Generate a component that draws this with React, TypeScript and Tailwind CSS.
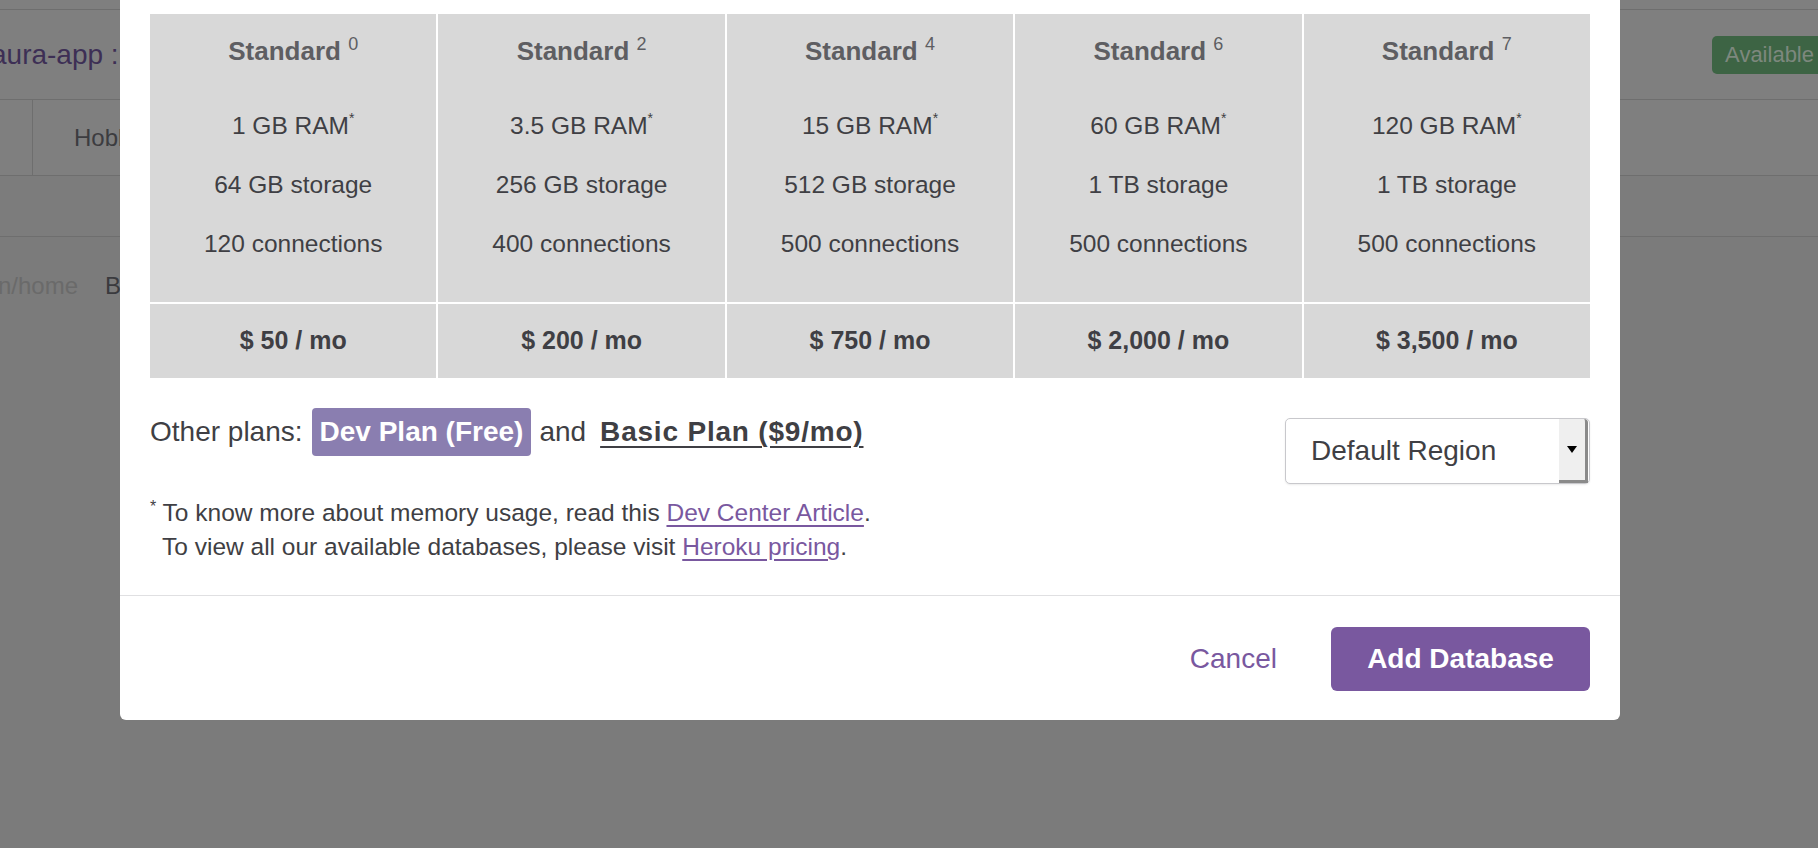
import React from 'react';

const plans = [
  { name: 'Standard', tier: '0', ram: '1 GB RAM', storage: '64 GB storage', conns: '120 connections', price: '$ 50 / mo' },
  { name: 'Standard', tier: '2', ram: '3.5 GB RAM', storage: '256 GB storage', conns: '400 connections', price: '$ 200 / mo' },
  { name: 'Standard', tier: '4', ram: '15 GB RAM', storage: '512 GB storage', conns: '500 connections', price: '$ 750 / mo' },
  { name: 'Standard', tier: '6', ram: '60 GB RAM', storage: '1 TB storage', conns: '500 connections', price: '$ 2,000 / mo' },
  { name: 'Standard', tier: '7', ram: '120 GB RAM', storage: '1 TB storage', conns: '500 connections', price: '$ 3,500 / mo' },
];

function PlanTable() {
  return (
    <div className="grid grid-cols-5 gap-[2px] bg-white">
      {plans.map((p) => (
        <div key={p.tier} className="flex h-[288px] flex-col items-center bg-[#d8d8d8] pt-[20px] text-[24.5px] leading-[34px] text-[#3f3f44]">
          <div className="text-[26px] font-bold text-[#5e5e62]">
            {p.name}{' '}
            <sup className="relative top-[-10px] align-baseline text-[18px] font-normal leading-none">{p.tier}</sup>
          </div>
          <div className="mt-[41px] flex flex-col items-center gap-[25px]">
            <div>
              {p.ram}
              <sup className="relative top-[-11px] text-[14px] leading-none">*</sup>
            </div>
            <div>{p.storage}</div>
            <div>{p.conns}</div>
          </div>
        </div>
      ))}
      {plans.map((p) => (
        <div key={p.tier + 'p'} className="flex h-[74px] items-center justify-center bg-[#d8d8d8] text-[25px] font-bold text-[#3f3f44]">
          {p.price}
        </div>
      ))}
    </div>
  );
}

function RegionSelect() {
  return (
    <div className="mt-[10px] flex h-[66px] w-[305px] items-stretch rounded-[5px] border border-[#c8c8cc] bg-white shadow-[0_1px_2px_rgba(0,0,0,0.08)]">
      <div className="flex flex-1 items-center pl-[25px] text-[28px] text-[#3f3f44]">Default Region</div>
      <div className="mr-[1px] flex w-[29px] items-center justify-center rounded-tr-[4px] border-r-[3px] border-b-[3px] border-[#8a8a8a] bg-[#efefef]">
        <div className="h-0 w-0 border-x-[5px] border-t-[7px] border-x-transparent border-t-black" />
      </div>
    </div>
  );
}

export default function App() {
  return (
    <div className="relative h-[848px] w-full overflow-hidden bg-[#7f7f7f] font-['Liberation_Sans',Arial,sans-serif]">
      {/* page behind the backdrop */}
      <div className="h-[9px]" />
      <div className="flex h-[90px] items-center justify-between border-t border-[#6e6e6e]">
        <span className="ml-[-9px] text-[28px] text-[#3d2f55]">aura-app :</span>
        <span className="mr-[-9px] flex h-[38px] items-center rounded-[5px] bg-[#3d6444] px-[13px] text-[22px] text-[#7d887e]">
          Available
        </span>
      </div>
      <div className="flex h-[77px] border-y border-[#6e6e6e]">
        <div className="w-[33px] border-r border-[#6e6e6e]" />
        <div className="flex items-center pl-[41px] text-[24px] text-[#3c3c40]">Hobby</div>
      </div>
      <div className="h-[61px] border-b border-[#6e6e6e] bg-[#7c7c7c]" />
      <div className="flex gap-[27px] bg-[#7b7b7b] pt-[32px] text-[24px] leading-[34px]">
        <span className="ml-[-2px] text-[#6a6a6a]">n/home</span>
        <span className="text-[#3a3a3e]">Billing</span>
      </div>
      <div className="h-full bg-[#7b7b7b]" />

      {/* dialog */}
      <div className="absolute left-[120px] top-0 w-[1500px] rounded-b-[6px] bg-white">
        <div className="px-[30px] pt-[14px] pb-[31px]">
          <PlanTable />
          <div className="mt-[30px] flex items-start justify-between">
            <div>
              <div className="flex h-[48px] items-center text-[28px] text-[#3f3f44]">
                <span>Other plans:</span>
                <span className="ml-[9px] flex h-[48px] items-center rounded-[4px] bg-[#8a7eb0] px-[8px] font-bold text-white">
                  Dev Plan (Free)
                </span>
                <span className="ml-[8px]">and</span>
                <a className="ml-[14px] font-bold tracking-[0.8px] text-[#3f3f44] underline decoration-[1.5px] underline-offset-[5px]">
                  Basic Plan ($9/mo)
                </a>
              </div>
              <div className="mt-[40px] text-[24.5px] leading-[34px] text-[#3f3f44]">
                <div>
                  <sup className="relative top-[-9px] text-[16px] leading-none">*</sup>{' '}
                  To know more about memory usage, read this{' '}
                  <a className="text-[#79589f] underline underline-offset-[4px]">Dev Center Article</a>.
                </div>
                <div className="pl-[12px]">
                  To view all our available databases, please visit{' '}
                  <a className="text-[#79589f] underline underline-offset-[4px]">Heroku pricing</a>.
                </div>
              </div>
            </div>
            <RegionSelect />
          </div>
        </div>
        <div className="flex items-center justify-end gap-[54px] border-t border-[#e0e0e2] px-[30px] pt-[31px] pb-[29px]">
          <button className="text-[28px] text-[#79589f]">Cancel</button>
          <button className="h-[64px] w-[259px] rounded-[6px] bg-[#79589f] text-[28px] font-bold text-white">
            Add Database
          </button>
        </div>
      </div>
    </div>
  );
}
